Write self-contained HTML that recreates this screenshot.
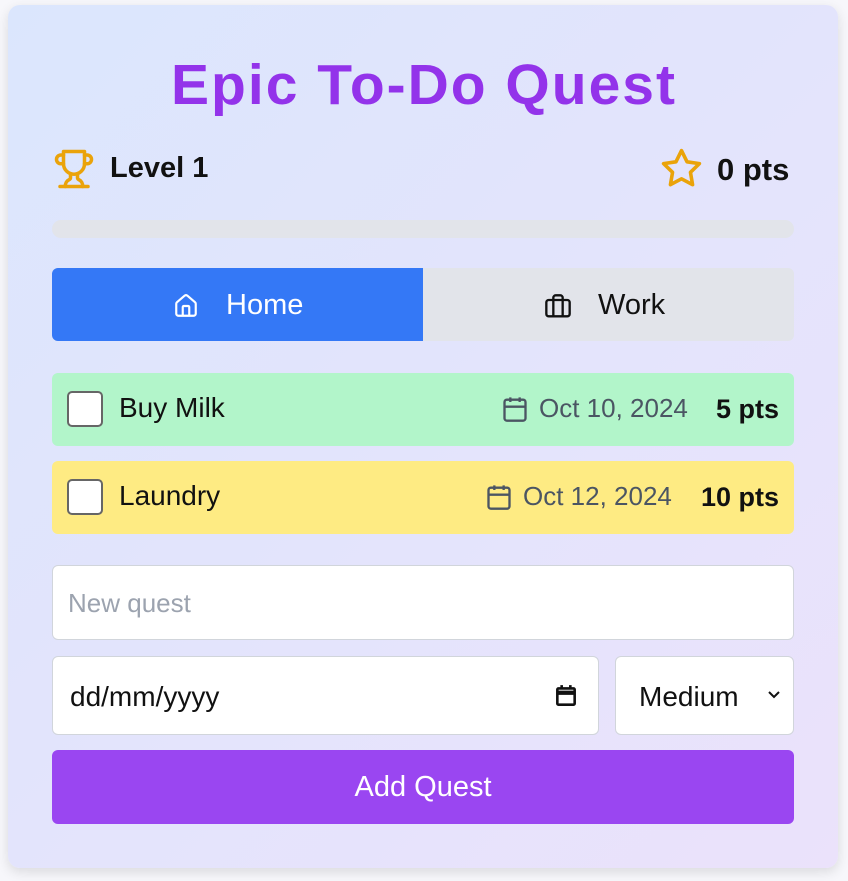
<!DOCTYPE html>
<html><head><style>
*{box-sizing:border-box;margin:0;padding:0}
body{width:848px;height:881px;background:#f7f7fb;font-family:"Comic Sans MS","Liberation Sans",sans-serif;position:relative;overflow:hidden}
.card{position:absolute;left:8px;top:5px;width:830px;height:863px;border-radius:12px;background:linear-gradient(135deg,#dbe6fd,#ebe2fb);box-shadow:0 4px 12px rgba(0,0,0,.12)}
.a{position:absolute}
h1{position:absolute;left:0;width:848px;top:52px;text-align:center;color:#9333ea;font-size:57px;font-weight:bold;letter-spacing:2px}
.b{font-weight:bold;font-size:29px;color:#111}
.task{position:absolute;left:52px;width:742px;height:73px;border-radius:6px}
.cb{position:absolute;left:15px;top:18px;width:36px;height:36px;border:2px solid #666;border-radius:5px;background:#fff}
.tn{position:absolute;left:67px;top:19px;font-size:28px;color:#111}
.dt{position:absolute;font-size:26px;color:#4b5563}
.pt{position:absolute;right:15px;top:21px;font-size:27px;font-weight:bold;color:#111}
.inp{position:absolute;background:#fff;border:1px solid #d1d5db;border-radius:6px}
</style></head><body>
<div class="card"></div>
<h1>Epic To-Do Quest</h1>
<svg class="a" style="left:53px;top:148px" width="42" height="42" viewBox="0 0 24 24" fill="none" stroke="#eaa30a" stroke-width="2" stroke-linecap="round" stroke-linejoin="round"><path d="M6 9H4.5a2.5 2.5 0 0 1 0-5H6"/><path d="M18 9h1.5a2.5 2.5 0 0 0 0-5H18"/><path d="M4 22h16"/><path d="M10 14.66V17c0 .55-.47.98-.97 1.21C7.85 18.75 7 20.24 7 22"/><path d="M14 14.66V17c0 .55.47.98.97 1.21C16.15 18.75 17 20.24 17 22"/><path d="M18 2H6v7a6 6 0 0 0 12 0V2Z"/></svg>
<div class="a b" style="left:110px;top:152px">Level 1</div>
<svg class="a" style="left:660px;top:147px" width="43" height="43" viewBox="0 0 24 24" fill="none" stroke="#eaa30a" stroke-width="2" stroke-linejoin="round"><polygon points="12 2 15.09 8.26 22 9.27 17 14.14 18.18 21.02 12 17.77 5.82 21.02 7 14.14 2 9.27 8.91 8.26 12 2"/></svg>
<div class="a b" style="left:717px;top:152px;font-size:31px">0 pts</div>
<div class="a" style="left:52px;top:220px;width:742px;height:18px;border-radius:9px;background:#e2e4ea"></div>
<div class="a" style="left:52px;top:268px;width:742px;height:73px;border-radius:6px;background:#e2e4ea;overflow:hidden">
<div class="a" style="left:0;top:0;width:371px;height:73px;background:#3478f6"></div>
<svg class="a" style="left:121px;top:25px" width="26" height="26" viewBox="0 0 24 24" fill="none" stroke="#fff" stroke-width="2" stroke-linejoin="round"><path d="M15 21v-8a1 1 0 0 0-1-1h-4a1 1 0 0 0-1 1v8"/><path d="M3 10a2 2 0 0 1 .7-1.5l7-6a2 2 0 0 1 2.6 0l7 6A2 2 0 0 1 21 10v9a2 2 0 0 1-2 2H5a2 2 0 0 1-2-2z"/></svg>
<div class="a" style="left:174px;top:21px;font-size:29px;color:#fff">Home</div>
<svg class="a" style="left:491px;top:25px" width="30" height="28" viewBox="0 0 24 24" fill="none" stroke="#111" stroke-width="2" stroke-linejoin="round"><path d="M16 20V4a2 2 0 0 0-2-2h-4a2 2 0 0 0-2 2v16"/><rect width="20" height="14" x="2" y="6" rx="2"/></svg>
<div class="a" style="left:546px;top:21px;font-size:29px;color:#111">Work</div>
</div>
<div class="task" style="top:373px;background:#b2f5ca"><div class="cb"></div><div class="tn">Buy Milk</div>
<svg class="a" style="left:449px;top:22px" width="28" height="28" viewBox="0 0 24 24" fill="none" stroke="#4b5563" stroke-width="2"><path d="M8 2v4M16 2v4"/><rect width="18" height="18" x="3" y="4" rx="2"/><path d="M3 10h18"/></svg>
<div class="dt" style="left:487px;top:20px">Oct 10, 2024</div><div class="pt">5 pts</div></div>
<div class="task" style="top:461px;background:#feeb83"><div class="cb"></div><div class="tn">Laundry</div>
<svg class="a" style="left:433px;top:22px" width="28" height="28" viewBox="0 0 24 24" fill="none" stroke="#4b5563" stroke-width="2"><path d="M8 2v4M16 2v4"/><rect width="18" height="18" x="3" y="4" rx="2"/><path d="M3 10h18"/></svg>
<div class="dt" style="left:471px;top:20px">Oct 12, 2024</div><div class="pt">10 pts</div></div>
<div class="inp" style="left:52px;top:565px;width:742px;height:75px"><div class="a" style="left:15px;top:22px;font-size:26px;color:#9ca3af">New quest</div></div>
<div class="inp" style="left:52px;top:656px;width:547px;height:79px"><div class="a" style="left:17px;top:24px;font-size:28px;color:#111">dd/mm/yyyy</div>
<svg class="a" style="left:500px;top:26px" width="26" height="26" viewBox="0 0 24 24" fill="none" stroke="#111" stroke-width="2.4"><rect x="4" y="5" width="16" height="15" rx="1"/><path d="M4 9h16" stroke-width="4"/><path d="M8 2v3M16 2v3"/></svg></div>
<div class="inp" style="left:615px;top:656px;width:179px;height:79px"><div class="a" style="left:23px;top:24px;font-size:28px;color:#111">Medium</div>
<svg class="a" style="left:150px;top:32px" width="16" height="12" viewBox="0 0 16 12" fill="none" stroke="#111" stroke-width="2"><path d="M3 3l5 5 5-5"/></svg></div>
<div class="a" style="left:52px;top:750px;width:742px;height:74px;border-radius:6px;background:#9a46f1;color:#fff;font-size:29px;text-align:center;line-height:74px">Add Quest</div>
</body></html>
